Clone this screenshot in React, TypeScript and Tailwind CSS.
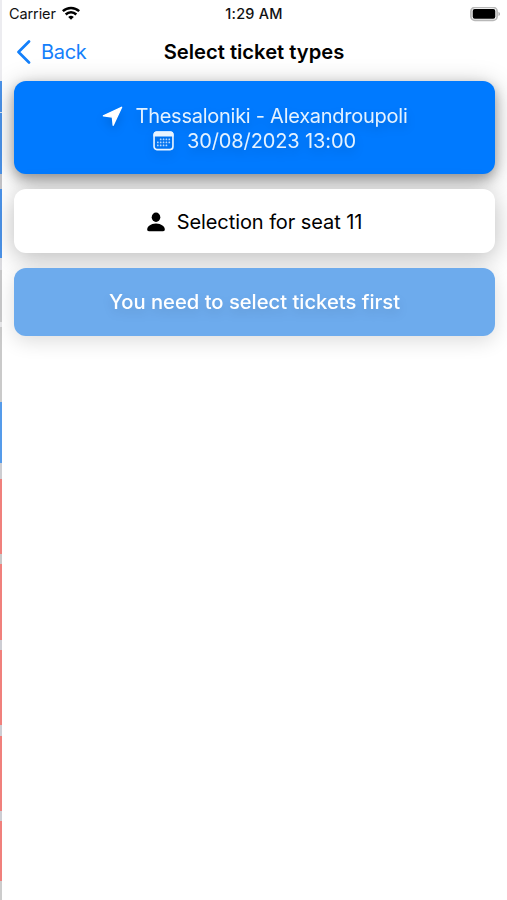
import React from 'react'

interface SeatSegment {
  height: number;
  color: string;
}

// Edge of the seat map that stays visible behind the pushed screen
const seatSegments: SeatSegment[] = [
  { height: 81, color: "bg-[#ececf0]" },
  { height: 31, color: "bg-[#4b92e8]" },
  { height: 1, color: "bg-[#dbe7f5]" },
  { height: 61, color: "bg-[#4b92e8]" },
  { height: 15, color: "bg-[#c4c4c8]" },
  { height: 69, color: "bg-[#4b92e8]" },
  { height: 12, color: "bg-[#dcdce0]" },
  { height: 52, color: "bg-[#c8c8c9]" },
  { height: 5, color: "bg-[#e6e6e8]" },
  { height: 75, color: "bg-[#cacaca]" },
  { height: 61, color: "bg-[#559bea]" },
  { height: 16, color: "bg-[#cdcdd1]" },
  { height: 75, color: "bg-[#f0807c]" },
  { height: 10, color: "bg-[#c8c8c8]" },
  { height: 76, color: "bg-[#f0807c]" },
  { height: 10, color: "bg-[#cdcdd3]" },
  { height: 75, color: "bg-[#f0807c]" },
  { height: 11, color: "bg-[#cdcdd3]" },
  { height: 75, color: "bg-[#f0807c]" },
  { height: 10, color: "bg-[#cdcdd3]" },
  { height: 60, color: "bg-[#f0807c]" },
  { height: 19, color: "bg-[#cccccc]" },
]

const WifiIcon: React.FC = () => (
  <svg width="18" height="14" viewBox="0 0 18 14" fill="none" stroke="#000" strokeWidth="2.5" className="-mt-[2px]">
    <path d="M0.8 5.2a11.8 11.8 0 0 1 16.4 0" />
    <path d="M3.7 8.5a7.6 7.6 0 0 1 10.6 0" />
    <path d="M9 13.8 6.2 11a4 4 0 0 1 5.6 0Z" fill="#000" stroke="none" />
  </svg>
)

const BatteryIcon: React.FC = () => (
  <svg width="31" height="15" viewBox="0 0 31 15">
    <rect x="0.9" y="0.4" width="26.2" height="13" rx="4" fill="#fff" stroke="#b8b8b8" strokeWidth="1.7" />
    <rect x="2.7" y="2.1" width="22.6" height="9.6" rx="2" fill="#000" />
    <path d="M28.5 4.700c2 .8 2 3.600 0 4.400Z" fill="#a8a8a8" />
  </svg>
)

const LocationIcon: React.FC = () => (
  <svg width="21" height="21" viewBox="0 0 21 21" fill="#fff" stroke="#fff" strokeWidth="1.4" strokeLinejoin="round">
    <path d="M1.400 9.800 19.600 1.300 11.200 19.300 10.400 11.100Z" />
  </svg>
)

const calendarDots = [
  [8, 8.2], [11, 8.2], [14, 8.2], [17, 8.2],
  [5, 11.2], [8, 11.2], [11, 11.2], [14, 11.2], [17, 11.2],
  [5, 14.2], [8, 14.2], [11, 14.2], [14, 14.2],
]

const CalendarIcon: React.FC = () => (
  <svg width="21" height="20" viewBox="0 0 22 20" preserveAspectRatio="none">
    <rect x="1.1" y="1.1" width="19.8" height="17.5" rx="3" fill="none" stroke="#e9f4ff" strokeWidth="1.7" />
    <path d="M.5 5.500V3.600A3 3 0 0 1 3.500.6h15a3 3 0 0 1 3 3v1.900Z" fill="#e9f4ff" />
    {calendarDots.map(([x, y]) => (
      <rect key={`${x}-${y}`} x={x - 0.8} y={y - 0.6} width="1.7" height="1.7" rx="0.4" fill="#b5d8ff" />
    ))}
  </svg>
)

const PersonIcon: React.FC = () => (
  <svg width="18" height="20" viewBox="0 0 18 20" fill="#000">
    <ellipse cx="9" cy="5.2" rx="4.300" ry="4.700" />
    <path d="M2 19.200C.8 19.200.2 18.600.2 17.500.2 14.700 3.600 11.600 9 11.600s8.800 3.100 8.800 5.900c0 1.100-.6 1.700-1.800 1.700Z" />
  </svg>
)

const App: React.FC = () => {
  return (
    <div className="flex h-[900px] w-[507px] overflow-hidden bg-white font-['Inter','Liberation_Sans',sans-serif] text-black">
      {/* Seat map edge */}
      <div className="flex w-[2px] shrink-0 flex-col">
        {seatSegments.map((segment, index) => (
          <div key={index} className={segment.color} style={{ height: segment.height }} />
        ))}
      </div>

      <div className="min-w-0 flex-1">
        {/* Status bar */}
        <div className="grid h-7 grid-cols-3 items-center pl-[7px] pr-[6px] text-[14.5px] text-[#111]">
          <div className="flex items-center gap-[6px]">
            <span className="tracking-[-0.1px]">Carrier</span>
            <WifiIcon />
          </div>
          <span className="pr-[2px] text-center font-medium tracking-[0.2px]">1:29 AM</span>
          <div className="flex justify-end">
            <BatteryIcon />
          </div>
        </div>

        {/* Navigation bar */}
        <div className="grid h-[53px] grid-cols-[140px_1fr_140px] items-center pb-[5px] pl-[14px] pr-[15px]">
          <button className="flex items-center gap-[9px] text-left text-[20px] tracking-[-0.3px] text-[#1480fb]">
            <svg width="16" height="24" viewBox="0 0 16 24" fill="none" stroke="currentColor" strokeWidth="2.7" strokeLinecap="round" strokeLinejoin="round">
              <path d="M13 1.500 2.500 12 13 22.500" />
            </svg>
            <span>Back</span>
          </button>
          <h1 className="whitespace-nowrap pt-px text-center text-[20.2px] font-semibold">Select ticket types</h1>
        </div>

        {/* Cards */}
        <div className="flex flex-col gap-[15px] pl-3 pr-3">
          <div className="flex h-[93px] flex-col items-center justify-center rounded-[12px] bg-[#007aff] pt-[2px] text-[20px] leading-[25px] text-[#e4f2ff] shadow-[0_5px_12px_rgba(0,0,0,0.28),0_5px_26px_rgba(0,0,0,0.28)]">
            <div className="flex items-center gap-[13px] drop-shadow-[0_5px_5px_rgba(0,0,0,0.14)]">
              <LocationIcon />
              <span className="tracking-[-0.26px]">Thessaloniki - Alexandroupoli</span>
            </div>
            <div className="flex items-center gap-[13px] drop-shadow-[0_5px_5px_rgba(0,0,0,0.14)]">
              <CalendarIcon />
              <span className="tracking-[-0.12px]">30/08/2023 13:00</span>
            </div>
          </div>

          <div className="flex h-[64px] items-center justify-center gap-[12px] rounded-[12px] bg-white pt-px text-[20px] shadow-[0_5px_24px_rgba(0,0,0,0.27)]">
            <PersonIcon />
            <span className="tracking-[-0.08px]">Selection for seat 11</span>
          </div>

          <button className="h-[68px] rounded-[12px] bg-[#6dabed] pt-px text-[20.2px] font-medium text-white shadow-[0_5px_20px_rgba(0,0,0,0.14)]">
            <span className="drop-shadow-[0_5px_5px_rgba(0,0,0,0.1)]">You need to select tickets first</span>
          </button>
        </div>
      </div>
    </div>
  )
}

export default App
